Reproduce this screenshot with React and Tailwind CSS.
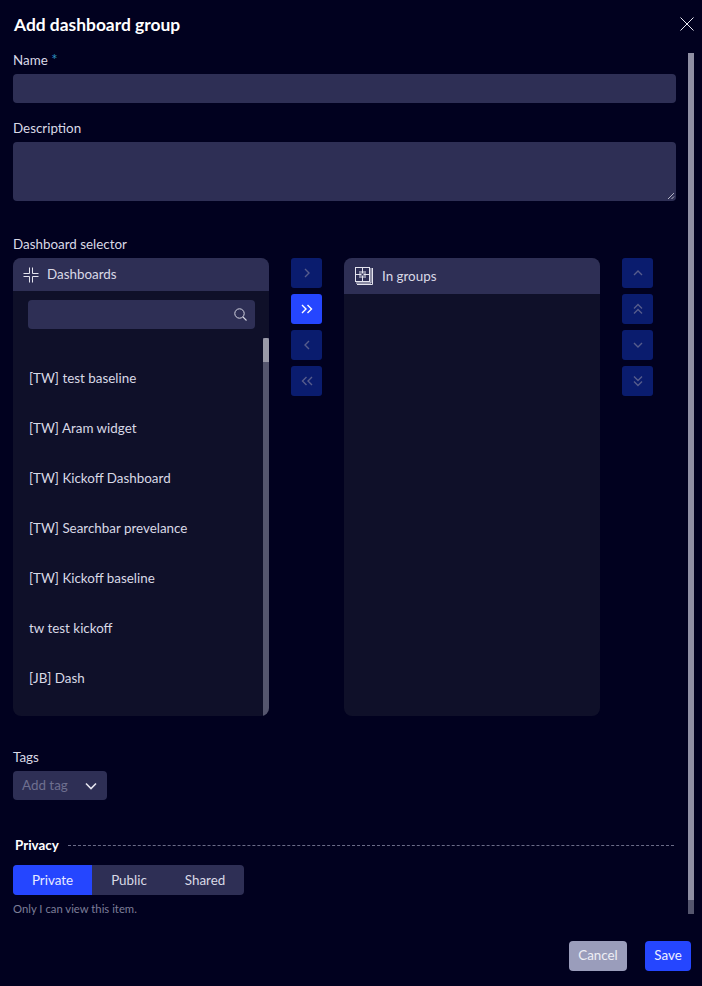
import React from "react";

const font = "font-['Lato','Noto_Sans',sans-serif]";

const Chevron = ({ d }) => (
  <svg className="w-[12px] h-[12px]" fill="none" stroke="currentColor" viewBox="0 0 12 12">
    <path strokeWidth="1.4" d={d} />
  </svg>
);

const moveButtons = [
  { d: "M4 2L8 6L4 10" },
  { d: "M1 2L5 6L1 10M6.5 2L10.5 6L6.5 10", active: true },
  { d: "M8 2L4 6L8 10" },
  { d: "M5.5 2L1.5 6L5.5 10M11 2L7 6L11 10" },
];

const orderButtons = [
  { d: "M2 8L6 4L10 8" },
  { d: "M2 5.5L6 1.5L10 5.5M2 10.5L6 6.5L10 10.5" },
  { d: "M2 4L6 8L10 4" },
  { d: "M2 1.5L6 5.5L10 1.5M2 6.5L6 10.5L10 6.5" },
];

const dashboards = [
  "[TW] test baseline",
  "[TW] Aram widget",
  "[TW] Kickoff Dashboard",
  "[TW] Searchbar prevelance",
  "[TW] Kickoff baseline",
  "tw test kickoff",
  "[JB] Dash",
];

const ButtonColumn = ({ items }) => (
  <div className="flex flex-col gap-[6px] w-[31px] shrink-0">
    {items.map((b, i) => (
      <button
        key={i}
        className={`h-[30px] rounded-[3px] flex items-center justify-center ${b.active ? "bg-[#2546ff] text-white" : "bg-[#0a1c6e] text-[#565c8c]"}`}
      >
        <Chevron d={b.d} />
      </button>
    ))}
  </div>
);

export default function App() {
  return (
    <div className={`${font} relative w-[702px] h-[986px] bg-[#01011f] text-[#d9d9e6] text-[13.4px] overflow-hidden`}>
      {/* Title + close */}
      <div className="flex justify-between items-start pl-[14px] pr-[8px] pt-[14px] h-[52px]">
        <h2 className="text-[17.4px] leading-[22px] font-bold text-white">Add dashboard group</h2>
        <svg className="w-[14px] h-[14px] mt-[3px]" fill="none" stroke="#e8e8f0" viewBox="0 0 14 14">
          <path strokeWidth="1" d="M0.5 0.5L13.5 13.5M13.5 0.5L0.5 13.5" />
        </svg>
      </div>

      {/* Page scrollbar */}
      <div className="absolute left-[688px] top-[53px] w-[6px] h-[861px] bg-[#8f8fa3]">
        <div className="absolute bottom-0 w-full h-[14px] bg-[#55566e]"></div>
      </div>

      <div className="pl-[13px] w-[676px]">
        <label className="block h-[16px] leading-[16px] -mt-[1px]">
          Name <span className="text-[#2a8fc0] text-[15px] leading-[16px]">*</span>
        </label>
        <div className="h-[29px] mt-[7px] rounded-[4px] bg-[#2e2f55]"></div>

        <label className="block leading-[16px] mt-[17px]">Description</label>
        <div className="relative h-[59px] mt-[6px] rounded-[4px] bg-[#2e2f55]">
          <svg className="absolute right-[1px] bottom-[1px] w-[8px] h-[8px]" stroke="#b5b5c6" viewBox="0 0 8 8">
            <path d="M1 7L7 1M4.5 7L7 4.5" />
          </svg>
        </div>

        <label className="block leading-[16px] mt-[35px]">Dashboard selector</label>

        <div className="flex mt-[6px] h-[458px]">
          {/* Available list */}
          <div className="w-[256px] shrink-0 rounded-[8px] overflow-hidden bg-[#0f1029] flex flex-col">
            <div className="h-[33px] bg-[#2e2f55] flex items-center pl-[10px] gap-[8px] shrink-0">
              <svg className="w-[16px] h-[16px]" fill="none" stroke="#e4e4ee" viewBox="0 0 16 16">
                <path strokeWidth="1" d="M0.5 6.5H6.5V0.5M9.5 0.5V6.5H15.5M0.5 9.5H6.5V15.5M9.5 15.5V9.5H15.5" />
              </svg>
              <span>Dashboards</span>
            </div>
            <div className="relative flex-1 min-h-0">
              <div className="mx-[15px] mt-[9px] h-[29px] w-[227px] rounded-[4px] bg-[#2e2f55] relative">
                <svg className="absolute right-[7px] top-[7px] w-[15px] h-[15px]" fill="none" stroke="#d5d5e2" viewBox="0 0 15 15">
                  <circle cx="6.5" cy="6.5" r="4.7" strokeWidth="1" />
                  <path strokeWidth="1.1" d="M10 10L13.5 13.5" />
                </svg>
              </div>
              <ul className="pt-[24px] pl-[16px]">
                {dashboards.map((d) => (
                  <li key={d} className="h-[50px] leading-[50px]">{d}</li>
                ))}
              </ul>
              <div className="absolute right-0 top-[47px] bottom-0 w-[6px] bg-[#55566e]">
                <div className="h-[24px] rounded-t-[2px] bg-[#9a9aa8]"></div>
              </div>
            </div>
          </div>

          <div className="ml-[22px]"><ButtonColumn items={moveButtons} /></div>

          {/* Selected list */}
          <div className="ml-[22px] w-[256px] shrink-0 rounded-[8px] overflow-hidden bg-[#0f1029]">
            <div className="h-[36px] bg-[#2e2f55] flex items-center pl-[11px] gap-[9px]">
              <svg className="w-[18px] h-[18px]" fill="none" stroke="#e4e4ee" viewBox="0 0 18 18">
                <rect x="4" y="4" width="7" height="7" strokeWidth="0" fill="#8a8ba3" />
                <rect x="0.5" y="0.5" width="14" height="14" strokeWidth="1" />
                <path strokeWidth="1" d="M7.5 0.5V14.5M0.5 7.5H14.5M16 1V16H1M17.5 1V17.5H2" />
                <rect x="6.5" y="6.5" width="2" height="2" strokeWidth="0" fill="#2e2f55" />
              </svg>
              <span>In groups</span>
            </div>
          </div>

          <div className="ml-[22px]"><ButtonColumn items={orderButtons} /></div>
        </div>

        <label className="block leading-[16px] mt-[33px]">Tags</label>
        <div className="w-[94px] h-[29px] mt-[6px] rounded-[4px] bg-[#2e2f55] flex items-center justify-between pl-[9px] pr-[9px]">
          <span className="text-[#6f7090]">Add tag</span>
          <svg className="w-[14px] h-[14px]" fill="none" stroke="#e4e4ee" viewBox="0 0 14 14">
            <path strokeWidth="1.6" d="M2 4.5L7 9.5L12 4.5" />
          </svg>
        </div>

        <div className="flex items-center mt-[37px] pl-[2px] h-[16px]">
          <span className="font-bold text-white">Privacy</span>
          <div className="flex-1 ml-[9px] mr-[2px] border-t border-dashed border-[#6b6c88]"></div>
        </div>

        <div className="flex w-[231px] h-[30px] mt-[12px] rounded-[4px] overflow-hidden bg-[#2e2f55]">
          <div className="w-[79px] bg-[#2546ff] text-[#e8ebff] flex items-center justify-center">Private</div>
          <div className="w-[74px] flex items-center justify-center">Public</div>
          <div className="flex-1 flex items-center justify-center">Shared</div>
        </div>
        <p className="text-[11.3px] leading-[14px] mt-[7px] text-[#7d7e98]">Only I can view this item.</p>
      </div>

      {/* Footer */}
      <div className="absolute right-[11px] bottom-[15px] flex gap-[18px]">
        <button className="w-[58px] h-[30px] pb-[1px] rounded-[4px] bg-[#9a9dbb] text-[#eeeef5]">Cancel</button>
        <button className="w-[46px] h-[30px] pb-[1px] rounded-[4px] bg-[#2546ff] text-[#eef0ff]">Save</button>
      </div>
    </div>
  );
}
